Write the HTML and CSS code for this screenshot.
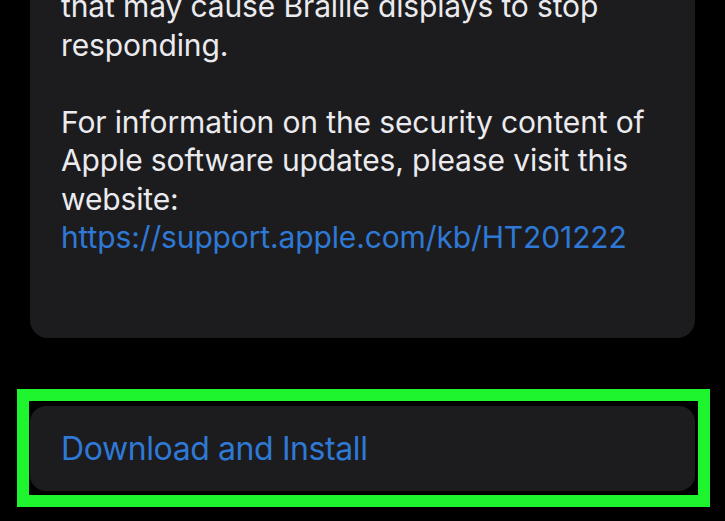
FILE: index.html
```html
<!DOCTYPE html>
<html lang="en">
<head>
<meta charset="utf-8">
<title>Software Update</title>
<link rel="stylesheet" href="styles.css">
</head>
<body>
<main class="screen">
  <section class="notes">
    <p class="para">that may cause Braille displays to stop<br>responding.</p>
    <p class="para">For information on the security content of<br>Apple software updates, please visit this<br>website:<br><a class="link" href="#">https://support.apple.com/kb/HT201222</a></p>
  </section>
  <div class="action">
    <button class="install" type="button">Download and Install</button>
    <span class="highlight" aria-hidden="true"></span>
  </div>
</main>
</body>
</html>
```
FILE: styles.css
```css
html, body {
  margin: 0;
  padding: 0;
  background: #000;
}
body {
  width: 725px;
  height: 521px;
  overflow: hidden;
  font-family: Inter, "Noto Sans", "Liberation Sans", sans-serif;
}
.screen {
  display: flex;
  flex-direction: column;
  padding: 0 30px;
}
.notes {
  margin-top: -33px;
  padding: 20px 31px 81px 31px;
  background: #1c1c1e;
  border-radius: 0 0 18px 18px;
  display: flex;
  flex-direction: column;
  gap: 38.5px;
}
.para {
  margin: 0;
  font-size: 30px;
  line-height: 38.5px;
  letter-spacing: -0.13px;
  color: #ebebef;
  white-space: nowrap;
}
.link {
  color: #2f79d6;
  text-decoration: none;
}
.action {
  position: relative;
  margin-top: 68.7px;
}
.install {
  display: block;
  width: 100%;
  height: 85px;
  margin: 0;
  padding: 0 31px;
  border: 0;
  border-radius: 16px;
  background: #1c1c1e;
  color: #2f79d6;
  font-family: Inter, "Noto Sans", "Liberation Sans", sans-serif;
  font-size: 32px;
  letter-spacing: -0.4px;
  line-height: 85px;
  text-align: left;
}
.highlight {
  position: absolute;
  left: -13px;
  top: -17.7px;
  width: 669px;
  height: 94px;
  border: 12px solid #1ff52e;
}
```
